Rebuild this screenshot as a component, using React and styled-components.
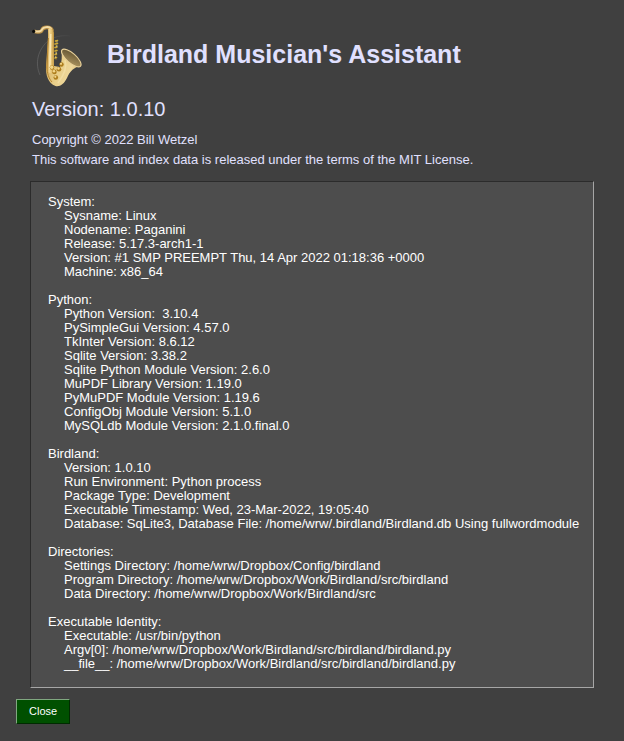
import React from "react";
import styled, { createGlobalStyle } from "styled-components";

const GlobalStyle = createGlobalStyle`
  *, *::before, *::after { box-sizing: border-box; }
  html, body { margin: 0; background: #404040; }
  body {
    font-family: "Liberation Sans", Arial, Helvetica, sans-serif;
    font-size: 13px;
    color: #e0e0ff;
  }
`;

const Window = styled.main`
  min-height: 100vh;
  padding: 24px 30px 16px 16px;
  background: #404040;
`;

const Header = styled.header`
  display: flex;
  align-items: center;
  gap: 24px;
  padding-left: 15px;
`;

const Logo = styled.svg`
  flex: none;
  width: 52px;
  height: 64px;
`;

const Title = styled.h1`
  margin: 0;
  padding-bottom: 4px;
  font-size: 25px;
  line-height: 32px;
  font-weight: bold;
`;

const Intro = styled.section`
  padding: 8px 0 11px 16px;
`;

const Version = styled.h2`
  margin: 0 0 8px;
  font-size: 20px;
  line-height: 26px;
  font-weight: normal;
`;

const Note = styled.p`
  margin: 0;
  line-height: 20px;
`;

const Panel = styled.section`
  display: flex;
  flex-direction: column;
  gap: 14px;
  margin-left: 14px;
  padding: 13px 8px 16px 17px;
  background: #4d4d4d;
  border: 1px solid;
  border-color: #2b2b2b #a6a6a6 #a6a6a6 #2b2b2b;
  color: #ffffff;
  line-height: 14px;
`;

const GroupTitle = styled.h3`
  margin: 0;
  font-size: 13px;
  font-weight: normal;
`;

const Lines = styled.ul`
  margin: 0;
  padding: 0 0 0 16px;
  list-style: none;
`;

const Line = styled.li`
  white-space: pre-wrap;
`;

const CloseButton = styled.button`
  display: block;
  height: 25px;
  margin-top: 11px;
  padding: 0 12px 2px;
  border: 1px solid;
  border-color: #80a780 #002b00 #002b00 #80a780;
  border-radius: 0;
  background: #005000;
  color: #ffffff;
  font-family: inherit;
  font-size: 11px;
  line-height: 14px;
`;

const groups = [
  {
    title: "System:",
    lines: [
      "Sysname: Linux",
      "Nodename: Paganini",
      "Release: 5.17.3-arch1-1",
      "Version: #1 SMP PREEMPT Thu, 14 Apr 2022 01:18:36 +0000",
      "Machine: x86_64",
    ],
  },
  {
    title: "Python:",
    lines: [
      "Python Version:  3.10.4",
      "PySimpleGui Version: 4.57.0",
      "TkInter Version: 8.6.12",
      "Sqlite Version: 3.38.2",
      "Sqlite Python Module Version: 2.6.0",
      "MuPDF Library Version: 1.19.0",
      "PyMuPDF Module Version: 1.19.6",
      "ConfigObj Module Version: 5.1.0",
      "MySQLdb Module Version: 2.1.0.final.0",
    ],
  },
  {
    title: "Birdland:",
    lines: [
      "Version: 1.0.10",
      "Run Environment: Python process",
      "Package Type: Development",
      "Executable Timestamp: Wed, 23-Mar-2022, 19:05:40",
      "Database: SqLite3, Database File: /home/wrw/.birdland/Birdland.db Using fullwordmodule",
    ],
  },
  {
    title: "Directories:",
    lines: [
      "Settings Directory: /home/wrw/Dropbox/Config/birdland",
      "Program Directory: /home/wrw/Dropbox/Work/Birdland/src/birdland",
      "Data Directory: /home/wrw/Dropbox/Work/Birdland/src",
    ],
  },
  {
    title: "Executable Identity:",
    lines: [
      "Executable: /usr/bin/python",
      "Argv[0]: /home/wrw/Dropbox/Work/Birdland/src/birdland/birdland.py",
      "__file__: /home/wrw/Dropbox/Work/Birdland/src/birdland/birdland.py",
    ],
  },
];

function Saxophone() {
  return (
    <Logo viewBox="0 0 52 64" role="img" aria-label="Saxophone">
      <defs>
        <linearGradient id="tube" x1="0" x2="1" y1="0" y2="0">
          <stop offset="0" stopColor="#c79a42" />
          <stop offset="0.4" stopColor="#f0d592" />
          <stop offset="0.7" stopColor="#e3bf6e" />
          <stop offset="1" stopColor="#b88a35" />
        </linearGradient>
        <linearGradient id="bow" x1="0" x2="1" y1="0.2" y2="0.8">
          <stop offset="0" stopColor="#c99b42" />
          <stop offset="0.5" stopColor="#e9cf8a" />
          <stop offset="0.75" stopColor="#eed79a" />
          <stop offset="1" stopColor="#caa85c" />
        </linearGradient>
        <linearGradient id="bell" x1="0" x2="1" y1="0" y2="1">
          <stop offset="0" stopColor="#5a4c2c" />
          <stop offset="0.55" stopColor="#8c784c" />
          <stop offset="1" stopColor="#b49a62" />
        </linearGradient>
        <linearGradient id="ring" x1="0" x2="1" y1="0" y2="0">
          <stop offset="0" stopColor="#6c6c6c" />
          <stop offset="1" stopColor="#464646" />
        </linearGradient>
      </defs>
      <path d="M9 51 C4 40 6 26 18 16 C25 12 33 11 39 12" fill="none" stroke="url(#ring)" strokeWidth="0.6" />
      <path d="M4 7.5 C7 8 10 9 11 6 C12 3 19 2 21 6" fill="none" stroke="#bd9349" strokeWidth="3.6" strokeLinecap="round" />
      <path d="M4 7.5 C7 7.5 10 8.5 11 5.5 C12 3 18 2 20 4.5" fill="none" stroke="#f3dca6" strokeWidth="2" strokeLinecap="round" />
      <circle cx="2.7" cy="7.4" r="1.6" fill="#090909" />
      <path d="M17 6 C20 3 23 6 23 11 L23 42 L29 43 C31 38 31 32 30.5 26 L50 42 C43 43 39 47 36 54 C33 60 29 63 24.5 62 C17 59 14.5 51 15 42 L17 14 Z" fill="url(#bow)" />
      <path d="M17 5 C20 3 23 6 23 11 L22.5 47 C21 51 16 49 15.5 44 L17.5 11 Z" fill="url(#tube)" />
      <path d="M19.8 10 L18.8 45" fill="none" stroke="#fff0c4" strokeWidth="1.4" opacity="0.8" />
      <path d="M17.4 14 L16 43 C16 49 18 55 21 58" fill="none" stroke="#af7d28" strokeWidth="0.9" />
      <path d="M25 16 L25 36" fill="none" stroke="#7b632a" strokeWidth="1" />
      <path d="M24.5 17 L26.5 16.5 M24 20 L26.5 19.5 M24 23.5 L26 23 M24 27 L26 26.5 M24 30.5 L25.5 30 M24 34 L25.5 33.5" stroke="#ceaa35" strokeWidth="1.6" strokeLinecap="round" />
      <path d="M25.5 18 H26.5 M25 22 H26.5 M24.5 29 H26 M24 33 H25" stroke="#f5e7a2" strokeWidth="0.9" />
      <ellipse cx="40.3" cy="34" rx="12.3" ry="4.7" transform="rotate(41 40.3 34)" fill="url(#bell)" stroke="#e8d099" strokeWidth="1.1" />
      <path d="M34 36 C36 42 33 51 27 59" fill="none" stroke="#f8e7b4" strokeWidth="1.6" opacity="0.5" />
      <g fill="#ad7d1d">
        <circle cx="20.9" cy="43.5" r="2.3" /><circle cx="30.5" cy="40.5" r="2.2" />
        <circle cx="28" cy="45.2" r="2.3" /><circle cx="23.4" cy="47.9" r="2.3" />
        <circle cx="24.8" cy="53.5" r="2.3" />
      </g>
      <g fill="#f3d68a">
        <circle cx="20.7" cy="43.2" r="1.7" /><circle cx="30" cy="39.8" r="1.1" />
        <circle cx="27.5" cy="44.5" r="1.2" /><circle cx="23" cy="47.2" r="1.3" />
        <circle cx="24.3" cy="52.8" r="1.1" />
      </g>
    </Logo>
  );
}

export default function App() {
  return (
    <>
      <GlobalStyle />
      <Window>
        <Header>
          <Saxophone />
          <Title>Birdland Musician's Assistant</Title>
        </Header>
        <Intro>
          <Version>Version: 1.0.10</Version>
          <Note>Copyright © 2022 Bill Wetzel</Note>
          <Note>This software and index data is released under the terms of the MIT License.</Note>
        </Intro>
        <Panel>
          {groups.map((group) => (
            <div key={group.title}>
              <GroupTitle>{group.title}</GroupTitle>
              <Lines>
                {group.lines.map((line) => (
                  <Line key={line}>{line}</Line>
                ))}
              </Lines>
            </div>
          ))}
        </Panel>
        <CloseButton type="button">Close</CloseButton>
      </Window>
    </>
  );
}
